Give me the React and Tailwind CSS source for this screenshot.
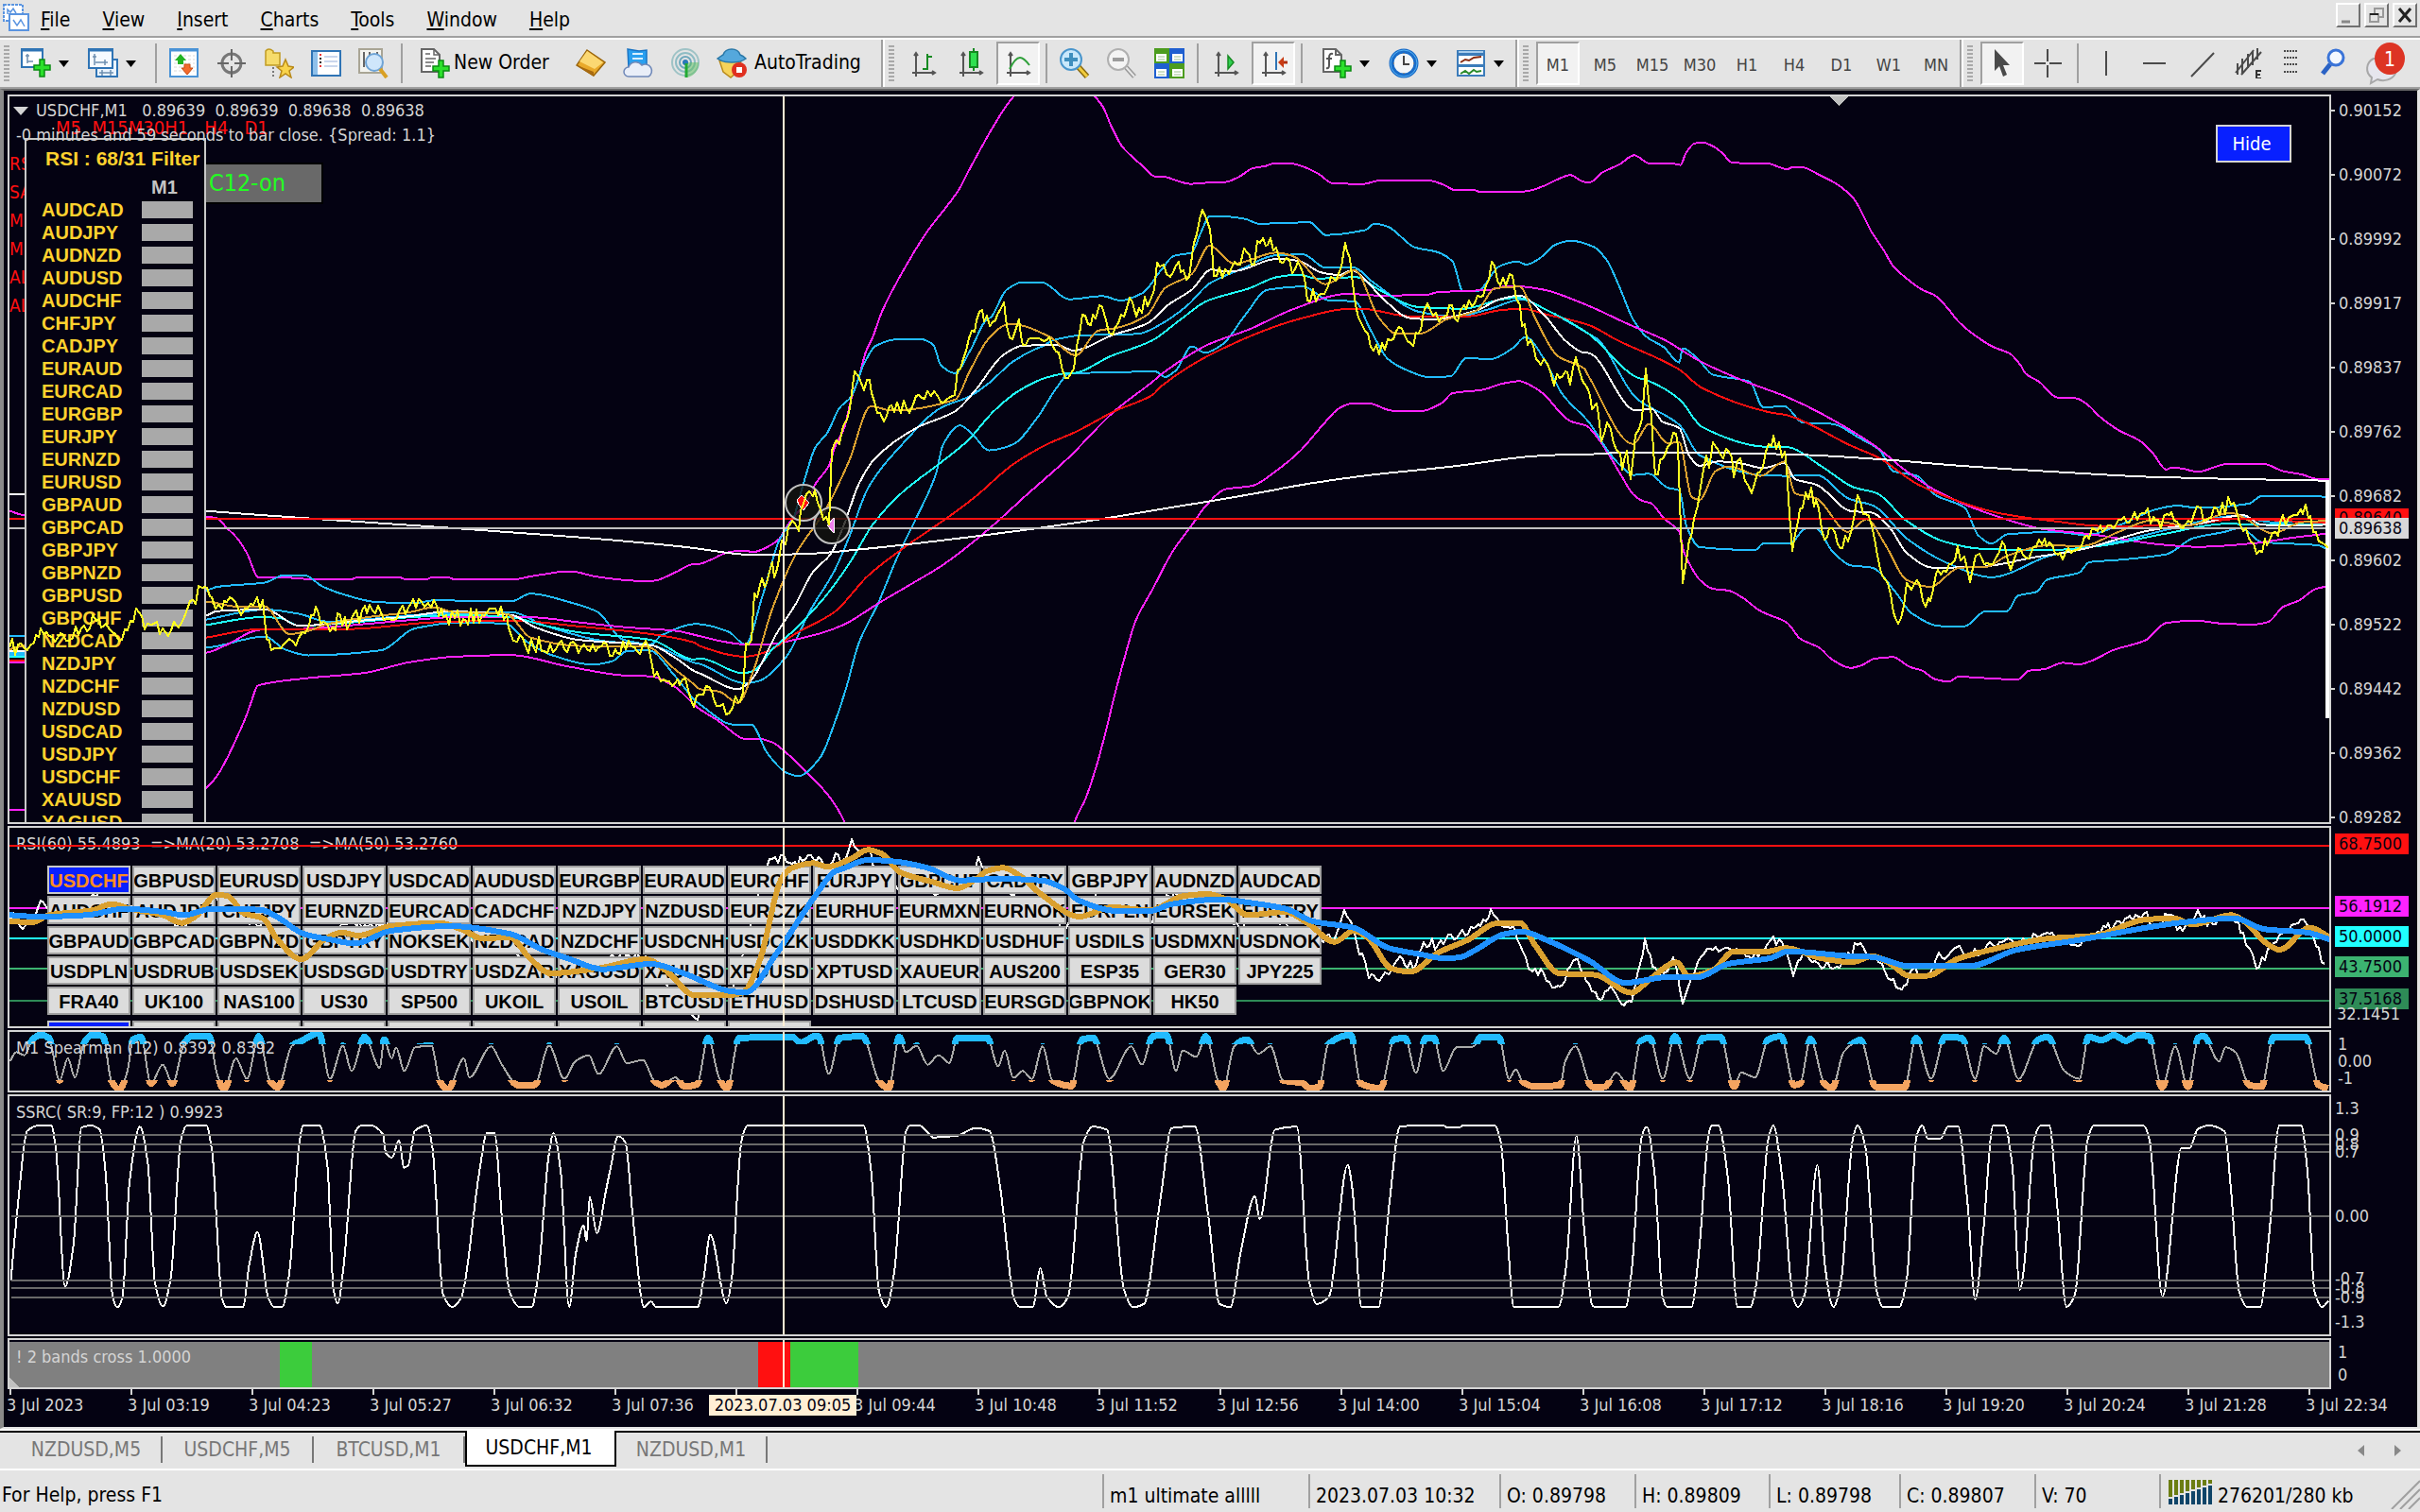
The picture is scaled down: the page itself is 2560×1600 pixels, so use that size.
import { useState } from "react";
import { clsx } from "clsx";

const MENUS = ["File", "View", "Insert", "Charts", "Tools", "Window", "Help"];
const TIMEFRAMES = ["M1", "M5", "M15", "M30", "H1", "H4", "D1", "W1", "MN"];
const CHART_TABS = ["NZDUSD,M5", "USDCHF,M5", "BTCUSD,M1", "USDCHF,M1", "NZDUSD,M1"];

const FILTER_SYMBOLS = [
  "AUDCAD", "AUDJPY", "AUDNZD", "AUDUSD", "AUDCHF", "CHFJPY", "CADJPY",
  "EURAUD", "EURCAD", "EURGBP", "EURJPY", "EURNZD", "EURUSD", "GBPAUD",
  "GBPCAD", "GBPJPY", "GBPNZD", "GBPUSD", "GBPCHF", "NZDCAD", "NZDJPY",
  "NZDCHF", "NZDUSD", "USDCAD", "USDJPY", "USDCHF", "XAUUSD", "XAGUSD",
];

const SYMBOL_ROWS = [
  ["USDCHF", "GBPUSD", "EURUSD", "USDJPY", "USDCAD", "AUDUSD", "EURGBP", "EURAUD", "EURCHF", "EURJPY", "GBPCHF", "CADJPY", "GBPJPY", "AUDNZD", "AUDCAD"],
  ["AUDCHF", "AUDJPY", "CHFJPY", "EURNZD", "EURCAD", "CADCHF", "NZDJPY", "NZDUSD", "EURCZK", "EURHUF", "EURMXN", "EURNOK", "EURPLN", "EURSEK", "EURTRY"],
  ["GBPAUD", "GBPCAD", "GBPNZD", "GBPTRY", "NOKSEK", "NZDCAD", "NZDCHF", "USDCNH", "USDCZK", "USDDKK", "USDHKD", "USDHUF", "USDILS", "USDMXN", "USDNOK"],
  ["USDPLN", "USDRUB", "USDSEK", "USDSGD", "USDTRY", "USDZAR", "XAGUSD", "XAUUSD", "XPDUSD", "XPTUSD", "XAUEUR", "AUS200", "ESP35", "GER30", "JPY225"],
  ["FRA40", "UK100", "NAS100", "US30", "SP500", "UKOIL", "USOIL", "BTCUSD", "ETHUSD", "DSHUSD", "LTCUSD", "EURSGD", "GBPNOK", "HK50"],
];

const PRICES = [
  "0.90152", "0.90072", "0.89992", "0.89917", "0.89837", "0.89762",
  "0.89682", "0.89602", "0.89522", "0.89442", "0.89362", "0.89282",
];

// an empty entry is a tick whose label gives way to the crosshair date
const TIMES = [
  "2023", "03:19", "04:23", "05:27", "06:32", "07:36", "", "09:44", "10:48", "11:52",
  "12:56", "14:00", "15:04", "16:08", "17:12", "18:16", "19:20", "20:24", "21:28", "22:34",
];

// every stretch of history has its own origin and scale: [x0, y0, kx, ky]
const FRAMES = {
  L: [0, 330, 0.5102, 0.3571],
  R: [740, 330, 0.5102, 0.3508],
  T: [1020, 180, 0.4719, 0.3333],
  F: [1680, 360, 0.5612, 0.338],
  A: [900, 0, 0.574, 0.3333],
  B: [1600, 0, 0.6122, 0.3333],
  P: [0, 860, 0.574, 0.3333],
  Q: [700, 860, 0.574, 0.3333],
  S: [1560, 860, 0.6378, 0.3333],
  U: [0, 1140, 0.6378, 0.3333],
  V: [1500, 1140, 0.676, 0.3333],
  W: [0, 0, 1.633, 1.633],
};

function toPoints(parts) {
  return Object.entries(parts).flatMap(([key, str]) => {
    const [x0, y0, kx, ky] = FRAMES[key[0]];
    return str.split(" ").map((p) => {
      const [x, y] = p.split(",").map(Number);
      return [x0 + x * kx, y0 + y * ky];
    });
  });
}

const toPath = (pts) => "M" + pts.map(([x, y]) => `${Math.round(x)} ${Math.round(y)}`).join("L");

// cubic path that never overshoots the key points
function toCurve(pts) {
  const slopes = pts.slice(1).map(([x, y], i) => (y - pts[i][1]) / Math.max(0.5, x - pts[i][0]));
  const tangents = pts.map((_, i) => {
    const a = slopes[i - 1] ?? slopes[i];
    const b = slopes[i] ?? a;
    return a * b <= 0 ? 0 : (2 * a * b) / (a + b);
  });
  let d = `M${pts[0][0]} ${pts[0][1]}`;
  for (let i = 1; i < pts.length; i++) {
    const [x1, y1] = pts[i - 1];
    const [x2, y2] = pts[i];
    const h = (x2 - x1) / 3;
    const c = [x1 + h, y1 + h * tangents[i - 1], x2 - h, y2 - h * tangents[i], x2, y2];
    d += "C" + c.map((n) => n.toFixed(1)).join(" ");
  }
  return d;
}

// fills the gaps between key points with small repeatable ticks
function withTicks(pts, step, size) {
  let seed = 7;
  const rand = () => {
    seed = (seed * 16807) % 2147483647;
    return seed / 2147483647 - 0.5;
  };
  const out = [];
  for (let i = 0; i < pts.length - 1; i++) {
    const [x1, y1] = pts[i];
    const [x2, y2] = pts[i + 1];
    const n = Math.max(1, Math.round(Math.abs(x2 - x1) / step));
    out.push([x1, y1]);
    for (let k = 1; k < n; k++) {
      out.push([x1 + ((x2 - x1) * k) / n, y1 + ((y2 - y1) * k) / n + rand() * size]);
    }
  }
  out.push(pts[pts.length - 1]);
  return out;
}

const BANDS = [
  {
    color: "#ff22ff",
    parts: {
      L: "20,590 50,602 200,600 428,607 450,612 470,640 490,668 512,715 536,787 600,788 640,792 730,792 740,787 828,787 840,792 885,792 895,787 930,787 940,792 1070,792 1100,784 1140,775 1170,769 1190,770 1230,783 1270,791 1320,797 1355,797 1400,772 1440,747 1450,747",
      R: "20,750 60,725 95,720 110,725 140,710 165,685 180,650 195,620 215,585 228,560 240,520 268,465 280,410 300,350 315,260 330,200 345,120 358,80 378,0",
      A: "104,837 139,740 200,600 215,550 240,470 265,395 285,340 300,306 320,260 430,260 450,306 465,340 480,400 500,465 520,500 540,530 560,560 580,562 600,573 625,584 660,580 690,578 715,562 740,535 765,527 780,519 810,519 830,527 860,550 890,583 945,584 975,573 1065,573 1090,585 1107,600",
      T: "1095,62 1145,64 1155,69 1229,69",
      B: "0,608 20,608 55,590 75,572 100,556 125,578 135,578 155,548 185,522 210,493 237,519 275,519 290,524 300,485 315,455 330,453 345,463 362,485 380,517 440,519 475,537 485,530 500,531 530,555 565,590 590,632 605,680 620,735 640,790 658,845 685,890 710,922 730,938 755,985 770,1020",
      F: "742,0 765,22 795,42 815,78 825,105 850,130 885,180 920,182 940,200 965,240 1000,282 1040,315 1065,355 1090,405 1100,398 1120,402 1150,412 1180,398 1205,387 1275,388 1310,410 1345,420 1375,435 1398,436",
    },
  },
  {
    color: "#ff22ff",
    parts: {
      L: "20,1475 50,1475 300,1500 428,1410 450,1375 470,1325 490,1265 510,1200 520,1160 535,1107 640,1085 755,1070 850,1038 940,1022 1060,1017 1175,1050 1300,1078 1350,1080 1400,1112 1440,1165",
      R: "0,1198 40,1235 75,1275 90,1287 120,1287 150,1298 180,1330 215,1380 265,1455 300,1538 310,1600 770,1600 778,1538 800,1470 825,1360 845,1250 860,1160 880,1050 905,930 940,835 980,725 1020,645 1050,585 1090,535 1145,525 1200,475 1245,420 1290,345 1325,292 1350,277",
      T: "880,740 905,740 960,764 1025,765 1070,740 1095,708 1160,698 1210,677 1245,670 1265,680 1300,712 1330,760 1360,798 1395,812 1420,850 1450,915 1475,975 1500,1030 1520,1050 1540,1058 1568,1105",
      F: "172,600 180,660 195,712 210,750 235,778 265,784 290,805 325,848 375,885 400,935 435,962 460,1000 495,1026 515,1018 540,997 575,992 605,1022 630,1035 655,1062 680,1069 700,1052 720,1055 810,1062 830,1035 860,1030 895,1010 925,1015 950,1003 990,970 1050,940 1090,885 1145,878 1200,888 1255,890 1282,882 1310,835 1340,815 1370,780 1393,770",
    },
  },
  {
    color: "#22bbff",
    parts: {
      L: "20,960 50,960 300,850 428,825 450,815 550,802 590,780 630,780 670,815 730,845 780,860 860,863 900,855 1060,858 1100,835 1180,860 1240,890 1290,970 1350,985 1370,960 1445,925",
      R: "0,942 60,965 95,1003 130,860 165,690 195,620 215,520 240,410 265,365 290,290 315,255 340,160 365,103 410,83 460,83 485,100 500,160 530,185 560,120 600,20",
      T: "55,471 95,380 130,356 175,357 235,410 310,400 350,414 400,390 440,320 470,272 510,262 530,200 550,147 590,148 630,155 660,170 775,166 810,206 900,190 920,170 950,180 1010,245 1060,260 1095,290 1118,385 1150,385 1200,305 1240,290 1260,300 1290,280 1325,237 1360,224 1410,243 1440,285 1470,375 1500,475 1530,530 1568,562",
      F: "172,70 178,25 210,65 235,108 305,130 330,210 370,207 405,258 460,262 510,305 550,345 575,410 620,425 655,485 710,525 735,610 760,637 790,608 880,600 940,610 1000,580 1070,530 1110,518 1150,525 1245,512 1270,488 1375,488 1395,494",
    },
  },
  {
    color: "#22bbff",
    parts: {
      L: "20,1012 50,1012 428,995 550,962 590,1000 640,1018 790,1003 860,938 960,920 1050,925 1090,975 1140,1015 1230,1045 1270,1035 1300,1005 1345,1003 1400,1080 1440,1150",
      R: "0,1183 70,1245 108,1246 140,1330 180,1390 205,1400 250,1345 280,1240 305,1130 330,1000 370,880 410,740 450,620 490,490 505,400 540,343 565,368 600,418 650,400 700,320 740,230 765,188",
      T: "250,645 430,640 450,657 475,635 510,560 540,580 580,552 630,460 680,380 760,370 820,415 875,416 910,505 950,600 1000,640 1040,657 1090,655 1125,597 1180,600 1230,565 1258,530 1300,600 1340,710 1400,800 1450,905 1480,950",
      F: "85,422 115,418 150,462 172,470 185,580 210,648 315,657 330,637 380,637 410,590 430,590 460,660 495,705 535,712 580,790 610,855 665,895 710,895 750,848 790,848 810,800 845,788 865,750 925,728 945,695 1000,688 1090,670 1140,620 1200,600 1230,588 1270,632 1375,642 1395,655",
    },
  },
  {
    color: "#22bbff",
    parts: {
      L: "20,1016 50,1016 428,912 550,882 620,895 680,918 750,912 900,895 1060,890 1130,930 1250,975 1350,988 1440,1040",
      R: "0,1062 95,1120 120,1115 180,1040 230,900 280,780 310,680 350,530 420,400 500,290 560,255 600,215 650,150 700,110",
      T: "175,560 200,540 260,525 390,520 440,490 500,430 550,360 620,315 700,270 760,268 810,310 870,308 920,360 1020,450 1100,465 1180,440 1250,410 1300,440 1400,520",
      F: "20,0 90,180 172,265 210,360 330,423 380,425 430,422 490,495 540,520 600,620 680,700 760,742 870,675 1000,630 1100,590 1220,550 1290,570 1395,566",
    },
  },
  {
    color: "#ff22ff",
    parts: {
      L: "20,1040 50,1040 428,1010 465,990 540,942 620,940 700,932 900,908 950,904 1100,905 1200,920 1300,935 1400,945",
      R: "0,978 50,995 95,1003 150,1002 200,988 250,970 300,943 370,880 440,820 500,768 545,720 600,655 680,550 765,440 860,300 940,210",
      T: "440,650 545,555 640,505 740,440 860,393 930,398 1035,397 1060,388 1180,380 1215,369 1250,370 1300,380 1390,425 1490,490",
      F: "145,0 210,65 290,125 375,178 440,230 540,330 600,410 660,475 750,540 860,592 950,608 1080,640 1150,647 1260,635 1320,620 1395,605",
    },
  },
  {
    color: "#ff1010",
    parts: {
      L: "20,1033 50,1033 428,965 540,940 720,940 900,920 1060,915 1200,932 1350,955 1440,980",
      R: "0,1008 95,1040 140,1025 200,970 280,905 350,795 430,705 510,625 570,560 650,460 720,400 780,362 860,300 940,250",
      T: "440,688 560,580 750,473 870,440 890,440 1000,464 1130,464 1200,445 1250,440 1310,460 1400,492",
      F: "55,0 170,90 215,150 340,225 375,235 495,330 550,370 620,450 700,505 770,540 880,567 970,582 1120,580 1220,560 1390,572",
    },
  },
  {
    color: "#20ffff",
    parts: {
      L: "20,1022 50,1022 428,928 540,905 580,907 620,930 750,918 850,905 960,898 1060,905 1130,930 1200,950 1350,972 1440,1030",
      R: "0,1045 90,1090 115,1080 150,1020 200,955 260,860 310,760 360,640 420,545 500,455 555,390 610,300 660,240 720,198 765,185",
      T: "240,645 330,590 420,542 480,480 545,415 640,375 700,340 750,332 790,344 880,340 930,380 1020,435 1120,440 1200,412 1240,405 1300,440 1400,520",
      F: "15,0 90,115 115,128 172,185 215,272 330,333 375,335 440,395 500,460 545,480 600,565 670,630 740,653 860,658 960,645 1090,605 1200,575 1395,578",
    },
  },
  {
    color: "#ffffff",
    parts: {
      L: "20,1005 50,1005 428,900 450,887 550,882 620,930 750,915 850,902 930,888 1060,898 1110,935 1200,972 1350,988 1400,1025 1440,1065",
      R: "0,1090 80,1138 105,1115 160,970 200,880 235,785 272,730 300,640 330,520 365,440 450,350 530,300 570,240 630,130 670,102 740,100",
      T: "220,560 245,573 330,525 410,487 460,425 510,380 555,315 575,322 610,320 700,282 750,288 800,325 840,333 870,318 900,350 940,410 1000,470 1050,474 1150,445 1200,410 1245,398 1300,460 1350,545 1390,580",
      F: "0,40 90,220 120,215 140,255 172,275 190,360 210,393 245,380 280,383 330,400 370,385 390,435 430,452 495,535 535,540 570,590 600,665 650,712 735,710 840,680 930,655 1060,595 1150,575 1235,548 1270,578 1330,580 1395,578",
    },
  },
  {
    color: "#daa02f",
    parts: {
      L: "20,1000 428,860 500,875 548,872 600,955 640,945 680,925 760,905 850,890 900,875 940,890 1050,895 1100,965 1200,990 1340,992 1400,1060 1440,1105",
      R: "0,1138 40,1145 80,1180 110,1090 150,900 200,730 260,600 310,450 355,285 400,298 530,265 560,180 600,80 640,38",
      T: "110,490 190,528 250,588 300,510 345,500 410,460 450,375 510,330 550,240 605,297 700,262 740,275 810,362 875,318 930,470 970,520 1020,520 1080,475 1150,445 1190,375 1245,370 1280,470 1330,590 1390,630",
      F: "0,110 85,325 115,262 150,322 172,320 195,490 210,500 240,410 265,395 325,425 370,380 390,480 430,495 490,600 525,560 560,640 600,750 645,772 700,712 750,710 790,675 870,642 930,645 1000,600 1060,565 1130,580 1210,540 1240,560 1290,605 1345,570 1395,565",
    },
  },
  {
    color: "#ffffff",
    parts: {
      L: "20,540 50,540 428,590 620,610 900,637 1200,668 1440,700",
      R: "0,715 110,733 220,730 330,717 600,672 800,632 1000,585 1200,535",
      T: "720,1008 900,970 1100,940 1280,908 1390,902",
      F: "0,357 60,352 180,352 390,358 560,374 700,393 890,413 1060,428 1200,434 1395,440",
    },
  },
];

const PRICE_LINE = {
  L: "20,995 50,997 70,980 85,938 120,965 150,965 175,930 205,910 220,925 240,955 265,945 282,880 300,940 320,925 355,945 370,935 400,855 425,815 440,845 460,880 482,850 500,900 520,865 545,855 552,970 575,998 600,970 620,965 640,930 655,875 665,925 690,935 705,900 720,940 750,885 790,890 840,895 875,860 905,870 920,905 960,910 1010,890 1050,900 1065,975 1090,990 1140,985 1240,995 1345,990 1357,1080 1400,1100 1415,1090 1438,1170",
  R: "0,1155 14,1130 30,1170 55,1215 75,1160 90,1150 97,1000 107,990 113,850 125,825 135,830 150,755 155,800 170,690 178,700 185,650 205,660 215,580 235,555 245,575 262,620 268,640 274,420 290,400 300,340 312,290 322,180 335,215 352,205 362,270 382,330 410,275 430,290 460,260 480,255 500,270 525,255 540,170 570,60 580,0",
  T: "34,450 45,480 75,460 90,420 102,530 122,475 132,555 155,535 190,530 212,580 220,635 240,645 258,520 265,460 295,470 303,430 325,515 352,460 370,405 385,465 425,380 432,295 447,300 462,340 480,290 505,340 515,230 535,125 550,190 560,335 585,315 600,310 633,260 645,300 663,230 675,240 700,245 715,295 755,310 770,415 795,395 815,370 840,330 853,230 865,280 877,430 905,520 912,560 930,585 955,540 982,505 1000,550 1018,520 1030,450 1045,445 1070,470 1088,430 1100,470 1120,430 1150,400 1170,365 1183,290 1195,350 1215,365 1230,335 1245,430 1262,555 1300,600 1322,685 1348,640 1358,680 1370,595 1385,670 1408,760 1417,740 1428,860 1442,800 1470,900 1475,950 1485,890 1495,980 1505,840 1520,790 1528,630 1540,780 1550,965 1560,920",
  F: "140,370 160,290 170,330 178,760 185,690 200,560 212,460 222,360 228,400 235,320 255,370 265,350 275,430 287,370 295,440 308,480 325,410 345,330 360,320 375,400 385,660 400,530 410,475 430,500 445,625 465,600 475,650 495,600 508,485 518,545 530,550 545,675 565,760 580,870 590,870 600,760 620,750 636,835 650,780 660,720 685,700 697,645 720,758 737,670 757,700 780,630 797,720 810,650 825,680 860,620 880,665 915,660 945,620 965,580 990,590 1020,570 1050,540 1080,590 1090,545 1125,580 1148,520 1160,565 1180,525 1212,515 1240,590 1260,670 1290,605 1320,555 1343,530 1362,550 1372,600 1395,650",
};

const RSI_LINE = {
  P: "18,345 30,325 42,370 60,345 75,280 85,300 140,300 180,262 240,300 300,345 340,365 390,262 470,350 520,420 555,470 640,355 700,360 830,330 880,410 950,440 1010,530 1100,470 1190,455 1280,650 1350,560",
  Q: "150,450 195,165 203,148 215,160 220,135 235,160 280,150 310,165 320,130 335,150 350,85 362,120 385,120 388,165 430,230 520,250 570,200 583,140 590,170 650,260 745,365 800,262 900,350 930,262 1000,250 1060,350 1150,350 1215,400 1240,400 1258,310 1275,370 1285,450 1297,470 1303,525 1322,535 1345,500 1365,465 1385,495 1405,410 1430,420 1470,385 1496,365",
  S: "10,360 27,305 40,345 65,360 80,440 90,495 115,510 133,555 150,530 167,465 180,510 200,570 212,590 225,550 243,605 260,600 275,480 283,400 295,490 310,520 330,460 345,605 360,520 380,450 400,425 430,440 460,465 480,440 490,405 510,410 528,520 545,440 570,480 600,490 635,420 665,460 690,530 708,560 725,500 750,520 765,465 800,425 820,460 850,420 880,405 900,420 945,385 990,420 1020,390 1060,360 1110,320 1130,360 1150,325 1175,375 1200,310 1215,360 1253,320 1275,380 1290,450 1297,495 1320,430 1345,370 1370,340 1390,390 1410,480",
};

const RSI_FAST = {
  P: "18,345 60,348 90,325 170,310 205,290 240,305 300,325 335,350 360,330 400,260 420,265 450,320 485,335 510,400 555,465 600,400 630,380 660,390 720,360 810,350 850,370 890,400 940,395 975,460 1015,510 1100,495 1190,465 1230,505 1280,580 1340,580 1370,570 1400,470 1440,210 1460,175 1500,160 1520,170",
  Q: "310,170 350,145 380,118 405,130 440,190 500,220 545,240 580,210 600,185 630,175 660,200 700,260 770,330 830,300 900,310 960,265 1005,258 1040,275 1080,325 1150,315 1190,350 1240,410 1275,375 1300,395 1345,495 1380,505 1430,445 1490,400",
  S: "0,390 35,352 75,350 100,420 140,510 200,515 260,572 290,530 335,475 355,520 395,500 430,440 480,442 517,430 570,460 625,475 660,455 690,480 720,518 750,518 800,465 850,438 950,400 1030,390 1110,340 1160,335 1190,355 1255,325 1280,350 1310,410 1335,435 1385,365 1418,395",
};

const RSI_SLOW = {
  P: "18,325 70,330 160,325 230,305 300,315 340,325 390,305 480,308 510,330 560,385 600,400 655,415 720,375 830,360 940,385 1000,435 1050,465 1110,497 1200,480 1260,510 1350,568 1375,570 1430,450 1500,270 1540,185",
  Q: "330,180 380,150 430,155 490,175 550,215 620,210 700,215 740,240 770,280 840,312 900,312 940,290 1030,275 1080,285 1150,305 1200,345 1275,365 1340,430 1400,450 1440,462 1470,460",
  S: "0,437 50,385 80,378 120,405 190,470 250,540 320,522 370,522 420,480 490,462 520,440 620,455 660,458 720,487 820,487 900,435 1000,405 1130,360 1180,347 1260,335 1310,370 1380,380 1418,403",
};

const SPEARMAN = {
  P: "18,790 30,760 45,770 60,720 75,705 90,715 110,850 125,780 138,840 155,730 170,705 190,710 205,850 220,878 235,820 245,720 260,712 278,860 300,800 318,860 340,730 355,708 385,708 400,830 413,878 435,780 455,845 477,710 497,850 512,872 538,740 555,725 588,700 608,845 632,740 648,820 672,712 700,810 708,720 722,780 730,745 745,820 765,745 795,740 810,850 825,878 855,780 865,840 905,742 925,800 955,865 985,865 1012,740 1040,845 1060,790 1085,770 1103,830 1137,742 1155,795 1185,785 1205,850 1220,865 1245,840 1262,870 1285,862 1305,715 1325,840 1340,875 1362,715 1460,712 1475,730 1505,708",
  Q: "290,712 308,830 328,715 370,710 400,850 418,875 438,712 450,760 470,740 490,800 510,770 530,795 545,715 600,715 620,805 632,755 648,842 665,820 682,845 702,742 720,850 755,868 775,720 795,715 825,845 865,742 885,800 905,710 930,705 948,820 960,755 985,775 1003,710 1025,850 1035,875 1055,742 1078,720 1100,765 1122,742 1145,850 1180,858 1195,875 1212,870 1228,735 1270,705 1288,860 1325,875 1350,720 1370,715 1390,825 1408,715 1423,715 1440,820 1465,745 1490,745",
  S: "0,740 10,712 40,712 57,845 68,815 80,855 100,870 142,865 150,790 167,742 195,870 215,870 235,825 258,875 275,725 290,715 312,845 332,710 357,845 378,715 408,712 430,870 442,825 465,840 487,720 508,710 530,865 540,860 557,718 580,860 593,875 612,760 640,722 665,870 713,872 732,715 757,845 780,712 808,715 830,845 845,742 865,765 878,715 902,845 935,720 950,712 978,820 1003,845 1018,712 1040,722 1060,706 1080,724 1100,706 1118,710 1140,872 1162,742 1183,870 1200,715 1208,708 1235,790 1245,745 1262,760 1285,865 1305,870 1325,712 1378,712 1400,865 1415,875",
};

const SSRC = {
  U: "18,645 30,400 45,170 65,153 85,153 93,235 108,665 122,530 135,160 150,153 165,165 175,300 187,700 195,730 203,700 215,330 232,157 245,270 257,650 270,728 283,640 300,200 310,153 342,153 352,240 368,700 375,729 403,729 413,600 427,492 445,700 455,729 468,729 480,620 497,200 503,153 530,153 543,280 553,670 560,718 570,600 590,170 600,153 615,153 635,180 640,240 650,255 662,200 670,287 677,280 688,170 708,153 717,220 735,690 750,729 765,700 795,300 808,177 820,177 833,460 845,680 862,729 882,729 893,620 910,250 918,178 930,300 944,729 955,560 968,470 973,520 978,380 990,495 1005,360 1013,285 1025,187 1037,205 1050,450 1068,729 1080,712 1088,729 1157,729 1167,640 1178,500 1205,718 1213,650 1230,200 1240,153 1432,153 1445,300 1458,680 1470,729 1483,620 1503,170 1510,153 1525,153 1550,193",
  W: "607,737 620,736 632,731 641,733 648,770 657,842 661,847 669,847 674,822 678,840 686,847 692,840 702,740 708,730 717,732 728,835 734,847 741,845 752,775 759,731 774,730 783,790 790,845 797,847 804,810 813,775 816,790 826,732 840,730 848,830 853,845 861,840 873,755 876,770 882,847 893,847 900,780 907,730",
  V: "0,153 40,153 45,159 65,159 70,153 120,153 130,210 140,500 150,729 220,729 232,600 248,187 260,480 272,720 276,729 325,729 335,600 350,190 358,157 370,300 383,700 390,729 428,729 440,550 455,180 460,153 470,153 485,320 500,729 520,729 530,650 548,200 556,153 570,320 587,700 595,729 605,690 625,280 637,600 650,729 662,650 680,200 688,153 700,220 718,680 728,729 753,729 765,640 780,190 789,153 798,194 818,194 830,155 845,155 860,400 872,705 885,480 900,153 918,153 930,280 942,675 948,610 965,190 975,153 988,153 1000,400 1015,729 1028,690 1048,200 1058,153 1135,153 1145,200 1165,695 1195,225 1208,225 1220,165 1238,153 1262,172 1272,350 1285,680 1298,729 1318,729 1332,500 1348,153 1382,153 1392,300 1403,680 1415,729 1425,710",
};

const CROSS_X = 829;

/* ---------- icons ---------- */

function Icon({ children }) {
  return (
    <svg viewBox="0 0 32 32" className="size-8 shrink-0" fill="none" aria-hidden="true">
      {children}
    </svg>
  );
}

const Plus = ({ x = 0, y = 0 }) => (
  <path
    transform={`translate(${x} ${y})`}
    d="M17 12h5v6h6v5h-6v7h-5v-7h-6v-5h6z"
    fill="#2be02b"
    stroke="#0a8a12"
    strokeWidth="1.5"
  />
);

const Axes = () => (
  <path d="M8 5v25M4 26h23M6 8l2-3 2 3M25 24l3 2-3 2" stroke="#555" strokeWidth="2" />
);

const ICONS = {
  newChart: (
    <Icon>
      <rect x="1" y="1" width="22" height="19" fill="#fff" stroke="#2f74b5" strokeWidth="2" />
      <path d="M1 2h22" stroke="#2f74b5" strokeWidth="3" />
      <path d="M7 6v10M5 8h4M7 14h6" stroke="#6d8fb0" strokeWidth="1.5" />
      <Plus x={3} />
    </Icon>
  ),
  profiles: (
    <Icon>
      <rect x="9" y="12" width="22" height="18" fill="#eaf4ff" stroke="#2f74b5" strokeWidth="2" />
      <path d="M12 26h15M15 23v6M24 23v6" stroke="#6d8fb0" strokeWidth="1.5" />
      <rect x="1" y="1" width="25" height="20" fill="#f5faff" stroke="#2f74b5" strokeWidth="2" />
      <path d="M1 2h25" stroke="#2f74b5" strokeWidth="3" />
      <path d="M7 6v12M5 9h4M8 15h13M18 12v6" stroke="#6d8fb0" strokeWidth="1.5" />
    </Icon>
  ),
  marketWatch: (
    <Icon>
      <rect x="1" y="1" width="29" height="29" fill="#fff" stroke="#4a93d6" strokeWidth="2" />
      <path d="M1 2h29" stroke="#4a93d6" strokeWidth="3" />
      <path d="M5 8h22M5 12h22M5 16h22M5 20h22M5 24h22" stroke="#d9d9d9" strokeDasharray="3 2" />
      <path d="M12 6l6 7h-3v4H9v-4H6z" fill="#22b422" />
      <path d="M19 28l-6-7h3v-4h6v4h3z" fill="#f36a2c" stroke="#c94a12" />
    </Icon>
  ),
  dataWindow: (
    <Icon>
      <circle cx="16" cy="16" r="10" stroke="#777" strokeWidth="3" />
      <path d="M16 1v12M16 19v12M1 16h12M19 16h12" stroke="#666" strokeWidth="2" />
    </Icon>
  ),
  navigator: (
    <Icon>
      <path d="M2 3q3-4 8 0v2h7v13H2z" fill="#f6dc6b" stroke="#c09a22" strokeWidth="1.5" />
      <path d="M10 20v11" stroke="#555" strokeWidth="1.5" strokeDasharray="2 2" />
      <path d="M23 12l3 7 6 1-5 4 2 7-6-4-6 4 2-7-5-4 6-1z" fill="#f9d44c" stroke="#b98a1a" strokeWidth="1.5" />
    </Icon>
  ),
  terminal: (
    <Icon>
      <rect x="1" y="3" width="30" height="26" fill="#fff" stroke="#2f74b5" strokeWidth="2" />
      <rect x="2" y="4" width="5" height="24" fill="#8fc0ea" />
      <path d="M14 9h14M14 14h14M14 19h14" stroke="#b9c9e6" strokeWidth="1.5" />
      <path d="M10 6v2M10 18v2" stroke="#e33" strokeWidth="2" />
      <path d="M10 10v2M10 14v2" stroke="#222" strokeWidth="2" />
    </Icon>
  ),
  tester: (
    <Icon>
      <rect x="1" y="1" width="24" height="25" fill="#f4f4f0" stroke="#a9a595" strokeWidth="2" />
      <path d="M6 4v16M12 4v6M20 4v6" stroke="#666" strokeWidth="2" />
      <circle cx="17" cy="15" r="9" fill="#cfe6fb" stroke="#6fa4d6" strokeWidth="2" />
      <path d="M23 22l7 9" stroke="#d9a023" strokeWidth="4" />
    </Icon>
  ),
  newOrder: (
    <Icon>
      <path d="M2 1h13l6 6v18H2z" fill="#fff" stroke="#666" strokeWidth="2" />
      <path d="M15 1v6h6M6 6h5M6 11h11M6 15h9M6 19h6" stroke="#666" strokeWidth="1.5" />
      <Plus x={3} y={1} />
    </Icon>
  ),
  metaEditor: (
    <Icon>
      <path d="M12 2l19 13-12 14L1 18z" fill="#e9a92a" stroke="#99650c" strokeWidth="1.5" />
      <path d="M12 3l17 12-9 7L4 14z" fill="#fbd873" />
      <path d="M1 18l18 7v5z" fill="#a86a10" />
    </Icon>
  ),
  vps: (
    <Icon>
      <path d="M5 1l12 2 8-1v19H6z" fill="#2aa0f0" stroke="#1a74c4" strokeWidth="1.5" />
      <path d="M10 6h11M10 11h11" stroke="#d8f0ff" strokeWidth="2" />
      <path d="M6 30a5 5 0 0 1 0-10 8 8 0 0 1 14-2 6 6 0 0 1 7 12z" fill="#e9eef8" stroke="#6f88b8" strokeWidth="1.5" />
    </Icon>
  ),
  signals: (
    <Icon>
      <circle cx="16" cy="15" r="14" stroke="#9fc3c6" strokeWidth="2" />
      <circle cx="16" cy="15" r="10" stroke="#8fbcc4" strokeWidth="2" />
      <circle cx="16" cy="15" r="6" stroke="#6fa8bc" strokeWidth="2" />
      <path d="M16 15l2 16a15 15 0 0 0 12-16z" fill="#5cc05c" opacity=".5" />
      <circle cx="16" cy="15" r="3" fill="#2878b8" />
      <path d="M17 16v15" stroke="#22aa33" strokeWidth="3" />
    </Icon>
  ),
  autoTrading: (
    <Icon>
      <path d="M3 13h23l-3 11-8 7-8-6z" fill="#f6d35a" stroke="#b98a1a" strokeWidth="1.5" />
      <path d="M1 11q4-3 6-4 2-6 9-6t9 6q3 1 6 4-5 4-15 4T1 11z" fill="#55a8dc" stroke="#2a78a8" strokeWidth="1.5" />
      <circle cx="24" cy="23" r="8" fill="#e03020" />
      <rect x="21" y="20" width="6" height="6" fill="#fff" />
    </Icon>
  ),
  bars: (
    <Icon>
      <Axes />
      <path d="M20 6v17M20 9h5M15 22h5" stroke="#168a22" strokeWidth="2" />
    </Icon>
  ),
  candles: (
    <Icon>
      <Axes />
      <path d="M19 0v24" stroke="#168a22" strokeWidth="2" />
      <rect x="15" y="4" width="8" height="16" fill="#30e050" stroke="#168a22" strokeWidth="2" />
    </Icon>
  ),
  line: (
    <Icon>
      <Axes />
      <path d="M7 22q6-12 11-12 4 0 10 8" stroke="#2fa03a" strokeWidth="2" />
    </Icon>
  ),
  zoomIn: (
    <Icon>
      <path d="M20 20l9 10" stroke="#8a6a10" strokeWidth="6" />
      <path d="M20 20l9 10" stroke="#f2cc3c" strokeWidth="3" />
      <circle cx="12" cy="12" r="11" fill="#c9e8fb" stroke="#4a96cc" strokeWidth="2" />
      <path d="M12 5v14M5 12h14" stroke="#3f8fbe" strokeWidth="4" />
    </Icon>
  ),
  zoomOut: (
    <Icon>
      <path d="M20 20l9 10" stroke="#999" strokeWidth="5" />
      <path d="M20 20l9 10" stroke="#e8e8e8" strokeWidth="2" />
      <circle cx="12" cy="12" r="11" fill="#f4f4f4" stroke="#b0b0b0" strokeWidth="2" />
      <path d="M6 12h12" stroke="#9c9c9c" strokeWidth="4" />
    </Icon>
  ),
  tile: (
    <Icon>
      <path d="M0 0h16v16H0zM16 16h16v16H16z" fill="#4c9c1e" />
      <path d="M16 0h16v16H16zM0 16h16v16H0z" fill="#1f5fd0" />
      <path d="M2 6h11v8H2zM19 6h11v8H19zM2 22h11v8H2zM19 22h11v8H19z" fill="#fff" />
      <path d="M4 9h7M4 12h7M21 9h7M21 12h7M4 25h7M4 28h7M21 25h7M21 28h7" stroke="#9cc08c" />
    </Icon>
  ),
  autoScroll: (
    <Icon>
      <Axes />
      <path d="M18 8l6 7-6 7z" fill="#30d050" stroke="#168a22" strokeWidth="1.5" />
    </Icon>
  ),
  chartShift: (
    <Icon>
      <Axes />
      <path d="M19 4v19" stroke="#2f74b5" strokeWidth="2" />
      <path d="M31 15h-6" stroke="#b03010" strokeWidth="3" />
      <path d="M27 9v12l-6-6z" fill="#c83c14" />
    </Icon>
  ),
  indicators: (
    <Icon>
      <path d="M2 1h13l6 6v18H2z" fill="#fff" stroke="#666" strokeWidth="2" />
      <path d="M15 1v6h6" stroke="#666" strokeWidth="2" />
      <path d="M12 6q-4-1-4 4v8q0 4-3 3M5 11h6" stroke="#555" strokeWidth="2" />
      <Plus x={3} y={1} />
    </Icon>
  ),
  periods: (
    <Icon>
      <circle cx="16" cy="16" r="13" fill="#f4f6f8" stroke="#1a6cc8" strokeWidth="5" />
      <circle cx="16" cy="16" r="14" stroke="#58b4f4" />
      <path d="M16 8v9h6" stroke="#444" strokeWidth="2" />
      <path d="M16 5v1M16 26v1M5 16h1M26 16h1" stroke="#888" strokeWidth="2" />
    </Icon>
  ),
  templates: (
    <Icon>
      <rect x="1" y="2" width="30" height="28" fill="#3c7cba" />
      <rect x="3" y="8" width="26" height="9" fill="#fff" />
      <rect x="3" y="20" width="26" height="8" fill="#fff" />
      <path d="M3 4h26" stroke="#a8ccec" strokeWidth="2" />
      <path d="M5 15l5-3 4 1 5-3 8-1" stroke="#8a2a10" strokeWidth="2" />
      <path d="M5 27l5-3 4 3 5-4 3 2 5-1" stroke="#2a8a2a" strokeWidth="2" />
    </Icon>
  ),
  cursor: (
    <Icon>
      <path d="M8 1v23l5-5 4 11 4-2-4-10h7z" fill="#4a4a4a" />
    </Icon>
  ),
  cross: (
    <Icon>
      <path d="M14 1v13M14 18v13M-1 16h13M16 16h13" stroke="#4a4a4a" strokeWidth="2" />
    </Icon>
  ),
  vertical: (
    <Icon>
      <path d="M16 3v26" stroke="#4a4a4a" strokeWidth="2" />
    </Icon>
  ),
  horizontal: (
    <Icon>
      <path d="M5 16h24" stroke="#4a4a4a" strokeWidth="2" />
    </Icon>
  ),
  trend: (
    <Icon>
      <path d="M6 30L30 5" stroke="#4a4a4a" strokeWidth="2" />
    </Icon>
  ),
  channel: (
    <Icon>
      <path d="M3 26L22 2M9 28L30 4M5 16v12M10 11v15M16 6v15M21 3v15M26 0v12" stroke="#4a4a4a" strokeWidth="2" />
      <path d="M30 24h-5v8h5M25 28h4" stroke="#333" strokeWidth="2" />
    </Icon>
  ),
  fibo: (
    <Icon>
      <path d="M9 3h15M9 10h15M9 17h15M9 25h15" stroke="#4a4a4a" strokeWidth="2" strokeDasharray="2 1" />
    </Icon>
  ),
  search: (
    <Icon>
      <circle cx="19" cy="10" r="8" fill="#f4f8ff" stroke="#3a74d8" strokeWidth="3" />
      <path d="M13 17L5 27" stroke="#2a62c4" strokeWidth="5" />
    </Icon>
  ),
};

/* ---------- toolbar ---------- */

function ToolButton({ icon, label, pressed }) {
  return (
    <button aria-label={label} aria-pressed={pressed} className="flex h-full w-[50px] shrink-0 items-center justify-center">
      <span
        className={clsx(
          "flex h-[46px] w-[46px] items-center justify-center",
          pressed && "border-2 border-[#a0a0a0] border-r-white border-b-white bg-[#f2f2f2]"
        )}
      >
        {ICONS[icon]}
      </span>
    </button>
  );
}

function DropButton({ icon, label }) {
  return (
    <button aria-label={label} className="flex h-full w-[71px] shrink-0 items-center gap-2 pl-2">
      {ICONS[icon]}
      <svg viewBox="0 0 11 7" className="h-[7px] w-[11px] shrink-0" aria-hidden="true">
        <path d="M0 0h11L5.5 7z" />
      </svg>
    </button>
  );
}

const Separator = () => <span className="mx-1 h-[42px] w-[2px] shrink-0 bg-[#a0a0a0]" />;

const Grip = () => (
  <span className="h-[38px] w-[6px] shrink-0 bg-[repeating-linear-gradient(#a8a8a8_0_2px,transparent_2px_4px)]" />
);

function ToolbarBreak() {
  return (
    <span className="flex h-full w-5 shrink-0 items-center gap-1">
      <span className="h-full w-1 border-l-2 border-[#a0a0a0] bg-white" />
      <Grip />
    </span>
  );
}

function Toolbar() {
  const [timeframe, setTimeframe] = useState("M1");
  return (
    <div role="toolbar" className="flex h-[52px] items-center overflow-hidden border-b-2 border-[#a0a0a0] text-[21px]">
      <span className="flex w-[14px] shrink-0 pl-1">
        <Grip />
      </span>
      <DropButton icon="newChart" label="New chart" />
      <DropButton icon="profiles" label="Profiles" />
      <span className="w-1 shrink-0" />
      <Separator />
      <ToolButton icon="marketWatch" label="Market Watch" />
      <ToolButton icon="dataWindow" label="Data Window" />
      <ToolButton icon="navigator" label="Navigator" />
      <ToolButton icon="terminal" label="Terminal" />
      <ToolButton icon="tester" label="Strategy Tester" />
      <Separator />
      <button className="flex h-full w-[170px] shrink-0 items-center gap-1 pl-[14px] whitespace-nowrap">
        {ICONS.newOrder}
        New Order
      </button>
      <ToolButton icon="metaEditor" label="MetaEditor" />
      <ToolButton icon="vps" label="Virtual hosting" />
      <ToolButton icon="signals" label="Signals" />
      <button className="flex h-full w-[182px] shrink-0 items-center gap-2 pl-2 whitespace-nowrap">
        {ICONS.autoTrading}
        AutoTrading
      </button>
      <ToolbarBreak />
      <ToolButton icon="bars" label="Bar chart" />
      <ToolButton icon="candles" label="Candlesticks" />
      <ToolButton icon="line" label="Line chart" pressed />
      <Separator />
      <ToolButton icon="zoomIn" label="Zoom in" />
      <ToolButton icon="zoomOut" label="Zoom out" />
      <ToolButton icon="tile" label="Tile windows" />
      <Separator />
      <ToolButton icon="autoScroll" label="Auto scroll" />
      <ToolButton icon="chartShift" label="Chart shift" pressed />
      <Separator />
      <span className="flex h-full shrink-0 pl-2">
        <DropButton icon="indicators" label="Indicators" />
        <DropButton icon="periods" label="Periods" />
        <DropButton icon="templates" label="Templates" />
      </span>
      <ToolbarBreak />
      {TIMEFRAMES.map((tf) => (
        <button
          key={tf}
          onClick={() => setTimeframe(tf)}
          className="flex h-full w-[50px] shrink-0 items-center justify-center text-[18px] text-[#444]"
        >
          <span
            className={clsx(
              "flex h-[46px] w-[46px] items-center justify-center pt-[2px]",
              tf === timeframe && "border-2 border-[#a0a0a0] border-r-white border-b-white bg-[#f2f2f2]"
            )}
          >
            {tf}
          </span>
        </button>
      ))}
      <ToolbarBreak />
      <ToolButton icon="cursor" label="Cursor" pressed />
      <ToolButton icon="cross" label="Crosshair" />
      <Separator />
      <ToolButton icon="vertical" label="Vertical line" />
      <ToolButton icon="horizontal" label="Horizontal line" />
      <ToolButton icon="trend" label="Trendline" />
      <ToolButton icon="channel" label="Equidistant channel" />
      <span className="flex h-full w-10 shrink-0 justify-center">
        <ToolButton icon="fibo" label="Fibonacci" />
      </span>
      <ToolButton icon="search" label="Search" />
      <button aria-label="Messages" className="relative ml-1 h-[46px] w-12 shrink-0">
        <svg viewBox="0 0 48 46" className="h-full w-full" aria-hidden="true">
          <path d="M14 18a13 12 0 0 0-2 20l-1 6 7-4a14 12 0 0 0 12-22z" fill="#e6e6ee" stroke="#a8a8a8" strokeWidth="2" />
          <ellipse cx="31" cy="18" rx="16" ry="17" fill="#dd3424" />
        </svg>
        <span className="absolute inset-x-0 top-1 pl-[14px] text-center text-[21px] text-white">1</span>
      </button>
    </div>
  );
}

function MenuBar() {
  return (
    <header className="flex h-[42px] shrink-0 items-center border-b-2 border-white pl-[3px] text-[21px] shadow-[inset_0_-2px_0_#a0a0a0]">
      <svg viewBox="0 0 28 30" className="mb-1 h-[30px] w-7 shrink-0" aria-hidden="true">
        <rect x="1" y="2" width="20" height="17" fill="#fff" stroke="#5a94e0" strokeWidth="2" strokeDasharray="3 1" />
        <path d="M5 12V7l3 3 3-4 3 5" stroke="#5a94e0" strokeWidth="1.5" fill="none" />
        <rect x="7" y="12" width="20" height="17" fill="#fff" stroke="#5a94e0" strokeWidth="2" />
        <path d="M11 18l4 6 4-6 4 7" stroke="#5a94e0" strokeWidth="1.5" fill="none" />
      </svg>
      <nav className="flex gap-[34px] pt-1 pl-[12px]">
        {MENUS.map((name) => (
          <button key={name}>
            <span className="underline decoration-2 underline-offset-2">{name[0]}</span>
            {name.slice(1)}
          </button>
        ))}
      </nav>
      <div className="mb-2 ml-auto flex gap-1 pr-[3px]">
        {["Minimize", "Restore", "Close"].map((name) => (
          <button
            key={name}
            aria-label={name}
            className="flex h-[26px] w-[26px] items-center justify-center border-2 border-white border-r-[#707070] border-b-[#707070]"
          >
            <svg viewBox="0 0 20 20" className="size-5" fill="none" stroke="#222" strokeWidth="2" aria-hidden="true">
              {name === "Minimize" && <path d="M3 17h9" stroke="#888" strokeWidth="3" />}
              {name === "Restore" && (
                <>
                  <path d="M8 8V3h9v9h-4" stroke="#999" />
                  <path d="M3 9h9v8H3z" stroke="#999" />
                  <path d="M3 9h9" />
                </>
              )}
              {name === "Close" && <path d="M4 3l12 14M16 3L4 17" strokeWidth="3" />}
            </svg>
          </button>
        ))}
      </div>
    </header>
  );
}

/* ---------- chart panes ---------- */

function Plot({ top, height, children, className }) {
  return (
    <svg
      viewBox={`10 ${top} 2454 ${height}`}
      preserveAspectRatio="none"
      shapeRendering="crispEdges"
      strokeLinejoin="round"
      fill="none"
      className={clsx("pointer-events-none absolute inset-0 h-full w-full", className)}
      aria-hidden="true"
    >
      {children}
    </svg>
  );
}

const Crosshair = ({ top, height }) => (
  <path d={`M${CROSS_X} ${top}v${height}`} stroke="#ffefd5" strokeWidth="2" />
);

function Pane({ className, axis, children }) {
  return (
    <section className={clsx("flex", className)}>
      <div className="relative min-w-0 flex-1 overflow-hidden border-2 border-[#d4d4d4]">{children}</div>
      <div className="relative w-[91px] shrink-0">{axis}</div>
    </section>
  );
}

function FilterPanel() {
  return (
    <div className="absolute top-11 bottom-0 left-4 w-[192px] overflow-hidden border-x-2 border-t-2 border-[#c8c8c8] bg-[#040212] font-['Liberation_Sans',sans-serif] text-[20px] leading-6 font-bold text-[#ffd22e]">
      <table className="w-full table-fixed">
        <caption className="h-[38px] pt-[6px] pl-[20px] text-left text-[21px] leading-7 whitespace-nowrap">RSI : 68/31 Filter</caption>
        <thead>
          <tr className="h-6 text-[#c4c4c4]">
            <th className="w-[122px]"></th>
            <th className="text-left">
              <span className="pl-[10px]">M1</span>
            </th>
          </tr>
        </thead>
        <tbody>
          {FILTER_SYMBOLS.map((symbol) => (
            <tr key={symbol} className="h-6">
              <td className="p-0 pl-4">{symbol}</td>
              <td className="p-0">
                <span className="block h-[18px] w-[54px] bg-[#a9a9a9]" />
              </td>
            </tr>
          ))}
        </tbody>
      </table>
    </div>
  );
}

function PricePane() {
  return (
    <Pane
      className="min-h-[600px] flex-1"
      axis={
        <>
          <ul className="absolute inset-x-0 top-2 -bottom-[2px] flex flex-col justify-between">
            {PRICES.map((price) => (
              <li key={price} className="flex items-center gap-1 leading-[18px]">
                <span className="h-[2px] w-1 bg-[#d4d4d4]" />
                {price}
              </li>
            ))}
          </ul>
          <span className="absolute top-[438px] left-1 h-5 w-[78px] bg-[#ff1010] pl-1 leading-5 text-[#040212]">0.89640</span>
          <span className="absolute top-[448px] left-1 h-[22px] w-[78px] bg-[#d8d8d8] pl-1 leading-[22px] text-[#040212]">0.89638</span>
        </>
      }
    >
      <Plot top={102} height={768}>
        {BANDS.map((band, i) => (
          <path key={i} d={toCurve(toPoints(band.parts))} stroke={band.color} strokeWidth="2" />
        ))}
        <path d="M10 549H2464" stroke="#ff1010" strokeWidth="2" />
        <path d="M10 559H2464" stroke="#c0c0c0" strokeWidth="2" />
        <path d="M1935 102h20l-10 10z" fill="#c0c0c0" />
        <g stroke="#c0c0c0" strokeWidth="2" fill="#14140f" fillOpacity=".8" shapeRendering="auto">
          <circle cx="850" cy="532" r="19" />
          <circle cx="880" cy="556" r="19" />
        </g>
        <path d="M848 524l4 4 4 4-6 8-5-6-2-5z" fill="#ff1010" stroke="#fff" />
        <path d="M882 548v16l-7-8z" fill="#ee82ee" stroke="#fff" />
        <path d="M2462 508v252" stroke="#fff" strokeWidth="5" />
      </Plot>
      <div className="absolute top-[56px] left-0 flex flex-col text-[19px] leading-[30px] text-[#ff1010]">
        <span>RSI</span>
        <span>SAR</span>
        <span>M</span>
        <span>M</span>
        <span>AL</span>
        <span>AL</span>
      </div>
      <div className="absolute top-[70px] left-[207px] h-11 w-[125px] border-y-2 border-r-2 border-black bg-[#696969] pl-1 text-[25px] leading-10 text-[#22ff22]">
        C12-on
      </div>
      <FilterPanel />
      <Plot top={102} height={768}>
        <path d={toPath(withTicks(toPoints(PRICE_LINE), 3, 18))} stroke="#ffff22" strokeWidth="2" />
        <Crosshair top={102} height={768} />
      </Plot>
      <p className="absolute top-[5px] left-1 flex items-center gap-2 leading-5 whitespace-pre">
        <svg viewBox="0 0 16 9" className="h-[9px] w-4" fill="#d4d4d4" aria-hidden="true">
          <path d="M0 0h16L8 9z" />
        </svg>
        {"USDCHF,M1   0.89639  0.89639  0.89638  0.89638"}
      </p>
      <p className="absolute top-[23px] left-[49px] text-[20px] leading-5 whitespace-pre text-[#ff1010]">{"M5  M15M30H1   H4   D1"}</p>
      <p className="absolute top-[31px] left-[7px] leading-5 whitespace-pre">{"-0 minutes and 59 seconds to bar close. {Spread: 1.1}"}</p>
      <button className="absolute top-[30px] right-10 h-10 w-20 border-2 border-[#d4d4d4] bg-[#0820ff] pr-1 text-[20px] text-white">Hide</button>
    </Pane>
  );
}

const RSI_TAGS = [
  { value: "68.7500", className: "mt-[8px] bg-[#ff1010]" },
  { value: "56.1912", className: "mt-[44px] bg-[#ff22ff]" },
  { value: "50.0000", className: "mt-[10px] bg-[#20ffff]" },
  { value: "43.7500", className: "mt-[10px] bg-[#3cb371]" },
  { value: "37.5168", className: "mt-[12px] bg-[#2e8b57]" },
];

function SymbolButton({ symbol, active, onClick }) {
  return (
    <button
      onClick={onClick}
      className={clsx(
        "flex h-[30px] w-[88px] justify-center overflow-hidden border-2 leading-[28px]",
        active ? "border-[#c8c8c8] bg-[#0820ff] text-[#ff8c1e]" : "border-[#a0a0a0] bg-[#dcdcdc] text-black"
      )}
    >
      {symbol}
    </button>
  );
}

function RsiPane() {
  const [symbol, setSymbol] = useState("USDCHF");
  return (
    <Pane
      className="h-[214px]"
      axis={
        <div className="flex flex-col pl-1">
          {RSI_TAGS.map((tag) => (
            <span key={tag.value} className={clsx("h-[22px] w-[78px] pl-1 leading-[22px] text-[#040212]", tag.className)}>
              {tag.value}
            </span>
          ))}
          <span className="-mt-1 pl-[2px] leading-[18px]">32.1451</span>
        </div>
      }
    >
      <p className="absolute top-[7px] left-[7px] leading-5 whitespace-pre">{"RSI(60) 55.4893  =>MA(20) 53.2708  =>MA(50) 53.2760"}</p>
      <Plot top={876} height={210}>
        <path d="M10 895H2464" stroke="#ff1010" strokeWidth="2" />
        <path d="M10 961H2464" stroke="#ff22ff" strokeWidth="2" />
        <path d="M10 993H2464" stroke="#20ffff" strokeWidth="2" />
        <path d="M10 1025H2464" stroke="#3cb371" strokeWidth="2" />
        <path d="M10 1059H2464" stroke="#2e8b57" strokeWidth="2" />
        <path d={toPath(withTicks(toPoints(RSI_LINE), 3, 11))} stroke="#fff" strokeWidth="2" />
      </Plot>
      <div className="relative flex flex-col gap-[2px] pt-10 pl-10 font-['Liberation_Sans',sans-serif] text-[20px] font-bold">
        {SYMBOL_ROWS.map((row, i) => (
          <div key={i} className="flex gap-[2px]">
            {row.map((name) => (
              <SymbolButton key={name} symbol={name} active={name === symbol} onClick={() => setSymbol(name)} />
            ))}
          </div>
        ))}
        <div className="mt-1 flex gap-[2px]">
          {Array.from({ length: 9 }, (_, i) => (
            <SymbolButton key={i} active={i === 0} />
          ))}
        </div>
      </div>
      <Plot top={876} height={210}>
        <path d={toCurve(toPoints(RSI_FAST))} stroke="#daa02f" strokeWidth="6" />
        <path d={toCurve(toPoints(RSI_SLOW))} stroke="#1e90ff" strokeWidth="6" />
        <Crosshair top={876} height={210} />
      </Plot>
    </Pane>
  );
}

function SpearmanPane() {
  const d = toCurve(toPoints(SPEARMAN));
  return (
    <Pane
      className="h-[66px]"
      axis={
        <ul className="flex flex-col pt-[6px] pl-[7px] leading-[18px]">
          <li>1</li>
          <li>0.00</li>
          <li>-1</li>
        </ul>
      }
    >
      <Plot top={1092} height={62}>
        <defs>
          <clipPath id="overbought">
            <rect x="0" y="1092" width="2560" height="13" />
          </clipPath>
          <clipPath id="oversold">
            <rect x="0" y="1143" width="2560" height="11" />
          </clipPath>
        </defs>
        <path d={d} stroke="#a9a9a9" strokeWidth="2" />
        <path d={d} stroke="#22bbff" strokeWidth="7" clipPath="url(#overbought)" />
        <path d={d} stroke="#f4a460" strokeWidth="7" clipPath="url(#oversold)" />
        <Crosshair top={1092} height={62} />
      </Plot>
      <p className="absolute top-[7px] left-[7px] leading-5">M1 Spearman (12) 0.8392 0.8392</p>
    </Pane>
  );
}

const SSRC_LEVELS = [
  { value: "1.3", className: "top-[6px]" },
  { value: "0.9", className: "top-[34px]" },
  { value: "0.8", className: "top-[44px]" },
  { value: "0.7", className: "top-[52px]" },
  { value: "0.00", className: "top-[120px]" },
  { value: "-0.7", className: "top-[186px]" },
  { value: "-0.8", className: "top-[196px]" },
  { value: "-0.9", className: "top-[206px]" },
  { value: "-1.3", className: "top-[232px]" },
];

function SsrcPane() {
  return (
    <Pane
      className="h-[256px]"
      axis={SSRC_LEVELS.map((level) => (
        <span key={level.value} className={clsx("absolute left-1 leading-[18px]", level.className)}>
          {level.value}
        </span>
      ))}
    >
      <Plot top={1160} height={252}>
        <path d={toCurve(toPoints(SSRC))} stroke="#fff" strokeWidth="2" />
        {[1201, 1211, 1219, 1287, 1355, 1363, 1373].map((y) => (
          <path key={y} d={`M12 ${y}H2464`} stroke="#696969" strokeWidth="2" />
        ))}
        <Crosshair top={1160} height={252} />
      </Plot>
      <p className="absolute top-[7px] left-[7px] leading-5">SSRC( SR:9, FP:12 ) 0.9923</p>
    </Pane>
  );
}

function CrossPane() {
  return (
    <Pane
      className="h-[54px]"
      axis={
        <ul className="flex flex-col gap-[6px] pt-[6px] pl-[7px] leading-[18px]">
          <li>1</li>
          <li>0</li>
        </ul>
      }
    >
      <Plot top={1418} height={50}>
        <path d="M10 1420H2464V1468H10z" fill="#808080" />
        <path d="M296 1420h34v48h-34zM836 1420h72v48h-72z" fill="#3ccc3c" />
        <path d="M802 1420h34v48h-34z" fill="#ff1010" />
        <path d="M10 1458l10 10H10z" fill="#c0c0c0" />
        <Crosshair top={1418} height={50} />
      </Plot>
      <p className="absolute top-[8px] left-[7px] leading-5">! 2 bands cross 1.0000</p>
    </Pane>
  );
}

function TimeAxis() {
  return (
    <div className="relative h-10 shrink-0 overflow-hidden pl-[2px]">
      <ol className="flex">
        {TIMES.map((time) => (
          <li key={time} className="w-32 shrink-0">
            <span className="block h-[6px] w-[2px] bg-[#d4d4d4]" />
            {time && <span className="-ml-[3px] block pt-[2px] leading-[18px] whitespace-nowrap">3 Jul {time}</span>}
          </li>
        ))}
      </ol>
      <time className="absolute top-[6px] left-[742px] h-[22px] w-[156px] bg-[#ffefd5] text-center leading-[22px] text-[#040212]">
        2023.07.03 09:05
      </time>
    </div>
  );
}

/* ---------- bottom bars ---------- */

function ChartTabs() {
  const [active, setActive] = useState("USDCHF,M1");
  return (
    <div className="flex h-[44px] shrink-0 border-y-2 border-white text-[21px]">
      <div role="tablist" className="flex h-10 w-full border-t-2 border-black pl-[12px]">
        {CHART_TABS.map((name) => (
          <button
            key={name}
            role="tab"
            aria-selected={name === active}
            onClick={() => setActive(name)}
            className={clsx(
              "flex w-[160px] items-center justify-center",
              name === active
                ? "-mt-[2px] h-[38px] border-x-2 border-b-2 border-black bg-white pr-1 text-black"
                : "h-9 text-[#777]"
            )}
          >
            <span className={clsx("w-full leading-7", name !== active && "border-r-2 border-[#777]")}>{name}</span>
          </button>
        ))}
        <span className="ml-auto flex items-center gap-8 pr-5">
          <button aria-label="Previous tabs">
            <svg viewBox="0 0 7 12" className="h-3 w-[7px]" fill="#888" aria-hidden="true">
              <path d="M7 0v12L0 6z" />
            </svg>
          </button>
          <button aria-label="Next tabs">
            <svg viewBox="0 0 7 12" className="h-3 w-[7px]" fill="#888" aria-hidden="true">
              <path d="M0 0v12l7-6z" />
            </svg>
          </button>
        </span>
      </div>
    </div>
  );
}

const STATUS_CELLS = [
  { text: "m1 ultimate alllll", className: "w-[218px]" },
  { text: "2023.07.03 10:32", className: "w-[202px]" },
  { text: "O: 0.89798", className: "w-[143px]" },
  { text: "H: 0.89809", className: "w-[142px]" },
  { text: "L: 0.89798", className: "w-[138px]" },
  { text: "C: 0.89807", className: "w-[143px]" },
  { text: "V: 70", className: "w-[132px]" },
];

function StatusBar() {
  return (
    <footer className="flex h-[44px] shrink-0 items-center text-[21px] whitespace-nowrap">
      <span className="flex-1 pt-[9px] pl-[2px]">For Help, press F1</span>
      {STATUS_CELLS.map((cell) => (
        <span key={cell.text} className={clsx("h-9 shrink-0 border-l-2 border-[#a0a0a0] pt-[9px] pl-[6px] leading-7", cell.className)}>
          {cell.text}
        </span>
      ))}
      <span className="flex h-9 w-[276px] shrink-0 gap-[6px] border-l-2 border-[#a0a0a0] pt-[9px] pl-2 leading-7">
        <svg viewBox="0 0 46 26" className="-mt-[3px] h-[26px] w-[46px]" aria-hidden="true">
          {[0, 1, 2, 3, 4, 5, 6, 7].map((i) => (
            <g key={i}>
              <rect x={i * 6} y="0" width="4" height={18 - i * 2} fill="#6b7d12" />
              <rect x={i * 6} y={20 - i * 2} width="4" height={6 + i * 2} fill="#0f4468" />
            </g>
          ))}
        </svg>
        276201/280 kb
        <svg viewBox="0 0 32 32" className="-mt-1 ml-auto size-8" stroke="#a0a0a0" strokeWidth="2" aria-hidden="true">
          <path d="M2 32L32 2M11 32L32 11M20 32l12-12" />
        </svg>
      </span>
    </footer>
  );
}

export default function App() {
  return (
    <div className="flex min-h-screen flex-col overflow-x-hidden bg-[#e4e4e4] text-black [font-family:'DejaVu_Sans_Condensed','DejaVu_Sans',sans-serif]">
      <MenuBar />
      <Toolbar />
      <main className="flex flex-1 flex-col gap-[2px] border-t-2 border-r-[3px] border-b-2 border-l-4 border-t-[#696969] border-r-[#e4e4e4] border-b-[#e4e4e4] border-l-[#8a8a8a] bg-[#040212] pt-1 pl-1 text-[18px] text-[#d4d4d4]">
        <PricePane />
        <RsiPane />
        <SpearmanPane />
        <SsrcPane />
        <div>
          <CrossPane />
          <TimeAxis />
        </div>
      </main>
      <ChartTabs />
      <StatusBar />
    </div>
  );
}
